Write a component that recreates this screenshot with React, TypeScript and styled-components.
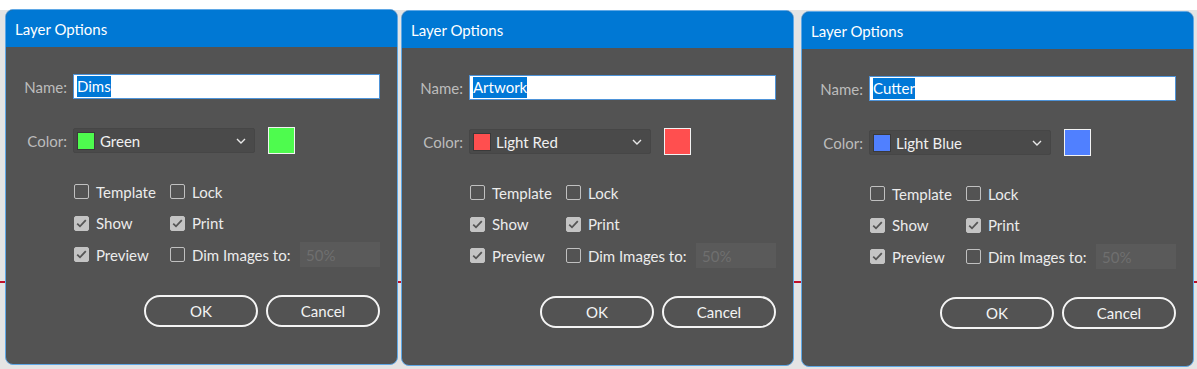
import React from 'react';
import styled, { createGlobalStyle } from 'styled-components';

const GlobalStyle = createGlobalStyle`
  html, body {
    margin: 0;
    padding: 0;
    width: 1197px;
    height: 369px;
    overflow: hidden;
    background:
      linear-gradient(to bottom, transparent 281px, #c0102a 281px, #c0102a 283px, transparent 283px),
      linear-gradient(to bottom, #ffffff 0, #ffffff 10px, #e4e4e4 10px);
    font-family: 'Lato', 'Open Sans', sans-serif;
  }
`;

const Page = styled.div`
  display: flex;
  align-items: flex-start;
  padding-left: 5px;
`;

const Dialog = styled.div<{ $top: number; $left: number }>`
  width: 393px;
  height: 356px;
  margin-top: ${p => p.$top}px;
  margin-left: ${p => p.$left}px;
  display: flex;
  flex-direction: column;
  background: #535353;
  border: 1px solid #5fa8e6;
  border-radius: 8px;
  box-sizing: border-box;
  overflow: hidden;
`;

const TitleBar = styled.div`
  height: 37px;
  flex-shrink: 0;
  background: #0078d4;
  color: #ffffff;
  font-size: 15px;
  display: flex;
  align-items: center;
  padding-left: 9px;
  padding-top: 1px;
  box-sizing: border-box;
`;

const Body = styled.div`
  display: flex;
  flex-direction: column;
  padding: 27px 17px 0 0;
`;

const FieldRow = styled.div<{ $mt?: number }>`
  display: flex;
  align-items: center;
  gap: 6px;
  margin-top: ${p => p.$mt ?? 0}px;
`;

const FieldLabel = styled.div`
  width: 61px;
  text-align: right;
  color: #bcbcbc;
  font-size: 15px;
`;

const NameInput = styled.div`
  flex: 1;
  height: 25px;
  background: #ffffff;
  border: 1px solid #4e93d8;
  box-sizing: border-box;
  display: flex;
  align-items: center;
  padding-left: 3px;
  font-size: 15px;
`;

const Selected = styled.span`
  background: #0078d7;
  color: #ffffff;
  padding: 1px 0;
  line-height: 19px;
`;

const Select = styled.div`
  width: 182px;
  height: 25px;
  background: #4a4a4a;
  border: 1px solid #464646;
  border-radius: 2px;
  box-sizing: border-box;
  display: flex;
  align-items: center;
  padding: 0 8px 0 3px;
  gap: 5px;
  color: #f0f0f0;
  font-size: 15px;
`;

const Chip = styled.span<{ $color: string }>`
  width: 18px;
  height: 18px;
  background: ${p => p.$color};
  border: 1px solid #3a3a3a;
  box-sizing: border-box;
  flex-shrink: 0;
`;

const SelectText = styled.span`
  flex: 1;
`;

const Swatch = styled.span<{ $color: string }>`
  width: 27px;
  height: 27px;
  margin-left: 7px;
  background: ${p => p.$color};
  border: 1px solid #f2f2f2;
  box-sizing: border-box;
`;

const Options = styled.div`
  display: grid;
  grid-template-columns: 96px 1fr;
  grid-auto-rows: 25px;
  row-gap: 6.5px;
  margin: 25px 0 0 68px;
`;

const Check = styled.label`
  display: flex;
  align-items: center;
  gap: 7px;
  color: #ececec;
  font-size: 15px;
  white-space: nowrap;
`;

const Box = styled.span<{ $on: boolean }>`
  width: 15px;
  height: 15px;
  box-sizing: border-box;
  border-radius: 2px;
  border: 1px solid ${p => (p.$on ? '#c4c4c4' : '#c0c0c0')};
  background: ${p => (p.$on ? '#c4c4c4' : 'transparent')};
  display: flex;
  align-items: center;
  justify-content: center;
  flex-shrink: 0;
`;

const DimInput = styled.span`
  width: 80px;
  height: 25px;
  margin-left: auto;
  background: #5a5a5a;
  color: #6f6f6f;
  font-size: 15px;
  display: flex;
  align-items: center;
  padding-left: 6px;
  box-sizing: border-box;
`;

const Buttons = styled.div`
  display: flex;
  justify-content: flex-end;
  gap: 8px;
  margin-top: 28px;
`;

const Button = styled.button`
  width: 114px;
  height: 32px;
  border: 2px solid #f4f4f4;
  border-radius: 16px;
  background: transparent;
  color: #f4f4f4;
  font-family: 'Lato', 'Open Sans', sans-serif;
  font-size: 15px;
  box-sizing: border-box;
`;

const Tick = () => (
  <svg width="11" height="9" viewBox="0 0 11 9">
    <path d="M1.2 4.6 L4 7.3 L9.8 1.2" fill="none" stroke="#555555" strokeWidth="1.8" />
  </svg>
);

const Checkbox = ({ label, on, children }: { label: string; on: boolean; children?: React.ReactNode }) => (
  <Check>
    <Box $on={on}>{on && <Tick />}</Box>
    {label}
    {children}
  </Check>
);

const Chevron = () => (
  <svg width="10" height="6" viewBox="0 0 10 6">
    <path d="M1 1 L5 5 L9 1" fill="none" stroke="#e8e8e8" strokeWidth="1.4" />
  </svg>
);

interface LayerDialogProps {
  name: string;
  colorName: string;
  color: string;
  top: number;
  left: number;
}

const LayerDialog = ({ name, colorName, color, top, left }: LayerDialogProps) => (
  <Dialog $top={top} $left={left}>
    <TitleBar>Layer Options</TitleBar>
    <Body>
      <FieldRow>
        <FieldLabel>Name:</FieldLabel>
        <NameInput><Selected>{name}</Selected></NameInput>
      </FieldRow>
      <FieldRow $mt={28}>
        <FieldLabel>Color:</FieldLabel>
        <Select>
          <Chip $color={color} />
          <SelectText>{colorName}</SelectText>
          <Chevron />
        </Select>
        <Swatch $color={color} />
      </FieldRow>
      <Options>
        <Checkbox label="Template" on={false} />
        <Checkbox label="Lock" on={false} />
        <Checkbox label="Show" on />
        <Checkbox label="Print" on />
        <Checkbox label="Preview" on />
        <Checkbox label="Dim Images to:" on={false}>
          <DimInput>50%</DimInput>
        </Checkbox>
      </Options>
      <Buttons>
        <Button>OK</Button>
        <Button>Cancel</Button>
      </Buttons>
    </Body>
  </Dialog>
);

export default function App() {
  return (
    <>
      <GlobalStyle />
      <Page>
        <LayerDialog name="Dims" colorName="Green" color="#4efb4e" top={9} left={0} />
        <LayerDialog name="Artwork" colorName="Light Red" color="#ff4f4f" top={10} left={3} />
        <LayerDialog name="Cutter" colorName="Light Blue" color="#5080ff" top={11} left={7} />
      </Page>
    </>
  );
}
